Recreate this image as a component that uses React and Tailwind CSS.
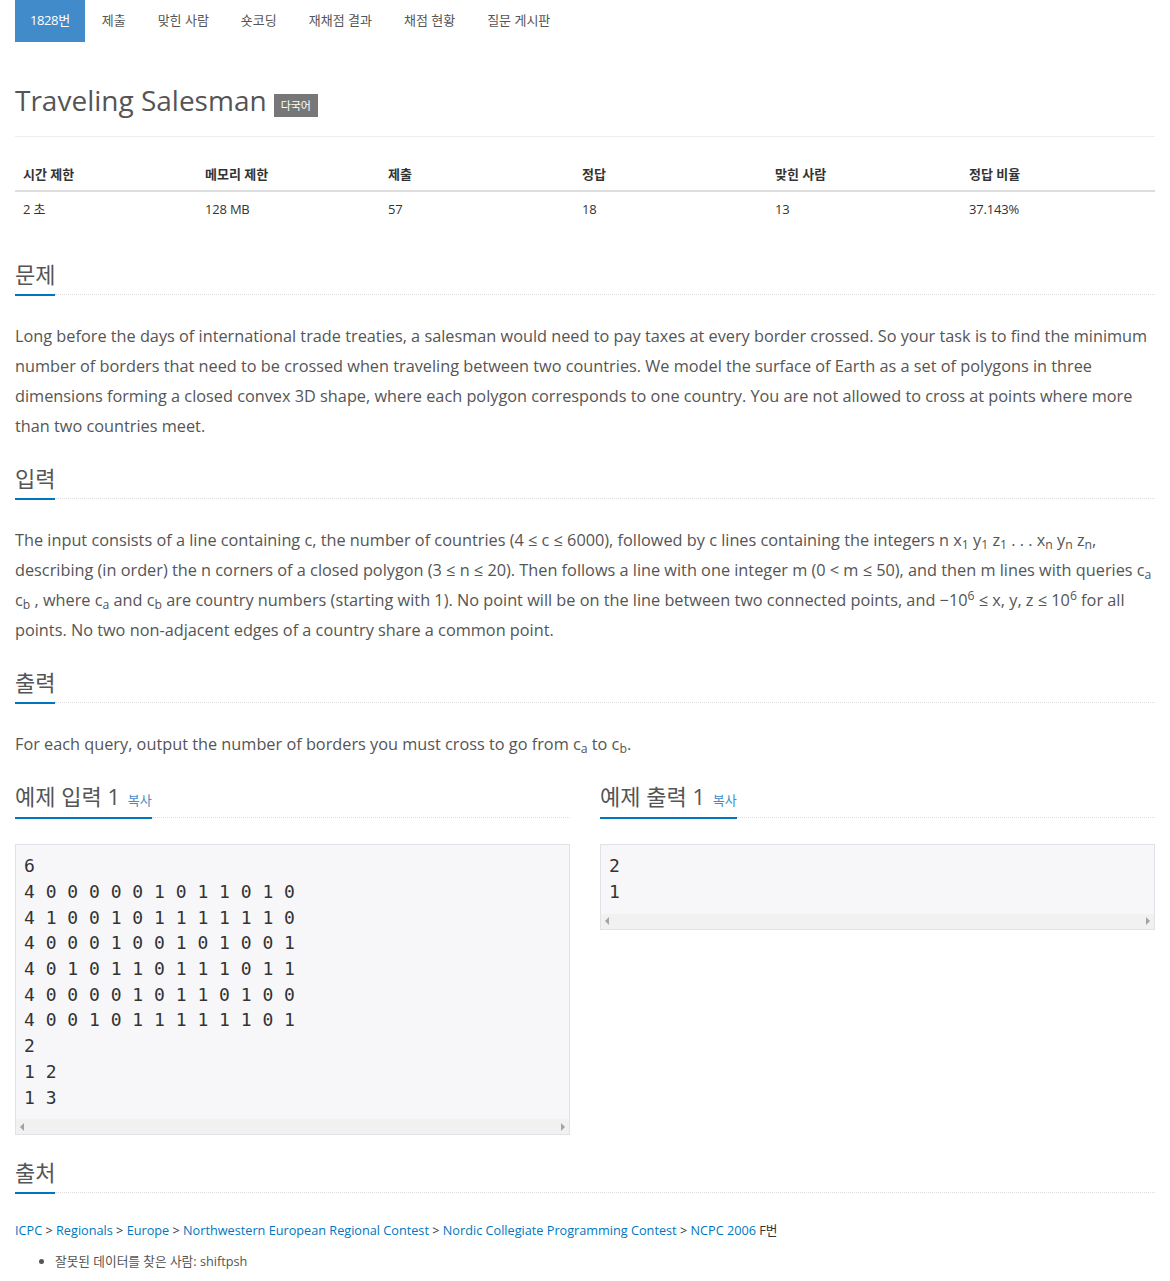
import React from 'react';

const FONT = { fontFamily: '"Open Sans", "Noto Sans CJK KR", sans-serif' };

const TABS = ['1828번', '제출', '맞힌 사람', '숏코딩', '재채점 결과', '채점 현황', '질문 게시판'];

const STATS = [
  ['시간 제한', '2 초'],
  ['메모리 제한', '128 MB'],
  ['제출', '57'],
  ['정답', '18'],
  ['맞힌 사람', '13'],
  ['정답 비율', '37.143%'],
];

const SAMPLE_IN = `6
4 0 0 0 0 0 1 0 1 1 0 1 0
4 1 0 0 1 0 1 1 1 1 1 1 0
4 0 0 0 1 0 0 1 0 1 0 0 1
4 0 1 0 1 1 0 1 1 1 0 1 1
4 0 0 0 0 1 0 1 1 0 1 0 0
4 0 0 1 0 1 1 1 1 1 1 0 1
2
1 2
1 3`;

const SAMPLE_OUT = `2
1`;

function Headline({ children, pb = 'pb-[7px]' }) {
  return (
    <div className="flex items-end">
      <h2 className={`text-[22px] leading-[26px] ${pb} border-b-2 border-[#0076c0] text-[#555] font-normal whitespace-nowrap`}>
        {children}
      </h2>
      <div className="flex-1 border-b border-dotted border-[#ddd] mb-[1px]" />
    </div>
  );
}

function Section({ title, children, pb }) {
  return (
    <section className="mb-[24px]">
      <Headline pb={pb}>{title}</Headline>
      <div className="mt-[25px]">{children}</div>
    </section>
  );
}

function Tri({ dir }) {
  return (
    <svg width="5" height="8" viewBox="0 0 5 8">
      {dir === 'left' ? <path d="M4 0 L0 4 L4 8 Z" fill="#a3a3a3" /> : <path d="M1 0 L5 4 L1 8 Z" fill="#a3a3a3" />}
    </svg>
  );
}

function Pre({ text }) {
  return (
    <div className="border border-[#e1e1e8] bg-[#f7f7f9]">
      <pre
        className="pl-[8px] pr-[9px] pt-[8px] pb-[9px] text-[18px] leading-[25.7px] text-[#333]"
        style={{ fontFamily: '"DejaVu Sans Mono", monospace' }}
      >
        {text}
      </pre>
      <div className="h-[15px] bg-[#f1f1f1] flex items-center justify-between px-[4px]">
        <Tri dir="left" />
        <Tri dir="right" />
      </div>
    </div>
  );
}

function Copy() {
  return <span className="text-[13px] leading-none text-[#428bca] ml-[2px]">복사</span>;
}

export default function App() {
  return (
    <div className="w-[1170px] px-[15px] bg-white text-[#555]" style={FONT}>
      <ul className="flex gap-[2px] h-[42px] text-[13px]">
        {TABS.map((t, i) => (
          <li
            key={t}
            className={`flex items-center px-[15px] ${i === 0 ? 'bg-[#428bca] text-white tracking-[-0.4px]' : 'text-[#555]'}`}
          >
            {t}
          </li>
        ))}
      </ul>

      <div className="pt-[42px] pb-[9px] mb-[20px] border-b border-[#eee]">
        <h1 className="flex items-end text-[28px] leading-[33px] font-normal text-[#555] mb-[10px]">
          <span>Traveling Salesman</span>
          <span className="ml-[7px] h-[23px] px-[7px] bg-[#777] text-white text-[11px] leading-[23px]">다국어</span>
        </h1>
      </div>

      <div className="grid grid-cols-[182px_183px_194px_193px_194px_1fr] text-[13px] leading-[18.6px] text-[#333]">
        {STATS.map(([h]) => (
          <div key={h} className="px-[8px] pt-[8px] pb-[6px] font-bold border-b-2 border-[#ddd]">
            {h}
          </div>
        ))}
        {STATS.map(([h, v]) => (
          <div key={h} className="px-[8px] py-[8px] tracking-[-0.2px]">
            {v}
          </div>
        ))}
      </div>
      <div className="h-[35px]" />

      <Section title="문제">
        <p className="text-[16.3px] leading-[30px]">
          Long before the days of international trade treaties, a salesman would need to pay taxes at every border crossed. So your task is to find the minimum number of borders that need to be crossed when traveling between two countries. We model the surface of Earth as a set of polygons in three dimensions forming a closed convex 3D shape, where each polygon corresponds to one country. You are not allowed to cross at points where more than two countries meet.
        </p>
      </Section>

      <Section title="입력">
        <p className="text-[16.3px] leading-[30px]">
          The input consists of a line containing c, the number of countries (4 ≤ c ≤ 6000), followed by c lines containing the integers n x<sub>1</sub> y<sub>1</sub> z<sub>1</sub> . . . x<sub>n</sub> y<sub>n</sub> z<sub>n</sub>, describing (in order) the n corners of a closed polygon (3 ≤ n ≤ 20). Then follows a line with one integer m (0 &lt; m ≤ 50), and then m lines with queries c<sub>a</sub> c<sub>b</sub> , where c<sub>a</sub> and c<sub>b</sub> are country numbers (starting with 1). No point will be on the line between two connected points, and −10<sup>6</sup> ≤ x, y, z ≤ 10<sup>6</sup> for all points. No two non-adjacent edges of a country share a common point.
        </p>
      </Section>

      <Section title="출력">
        <p className="text-[16.3px] leading-[30px]">
          For each query, output the number of borders you must cross to go from c<sub>a</sub> to c<sub>b</sub>.
        </p>
      </Section>

      <div className="grid grid-cols-2 gap-[30px]">
        <Section
          pb="pb-[8px]"
          title={
            <>
              예제 입력 1 <Copy />
            </>
          }
        >
          <Pre text={SAMPLE_IN} />
        </Section>
        <Section
          pb="pb-[8px]"
          title={
            <>
              예제 출력 1 <Copy />
            </>
          }
        >
          <Pre text={SAMPLE_OUT} />
        </Section>
      </div>

      <Section title="출처">
        <div className="text-[12.7px] leading-[18.6px] pt-[2px]">
          <p className="text-[#333]">
            <a className="text-[#0076c0]">ICPC</a> &gt; <a className="text-[#0076c0]">Regionals</a> &gt;{' '}
            <a className="text-[#0076c0]">Europe</a> &gt; <a className="text-[#0076c0]">Northwestern European Regional Contest</a> &gt;{' '}
            <a className="text-[#0076c0]">Nordic Collegiate Programming Contest</a> &gt; <a className="text-[#0076c0]">NCPC 2006</a> F번
          </p>
          <ul className="list-disc pl-[40px] mt-[12px] text-[#555]">
            <li>잘못된 데이터를 찾은 사람: shiftpsh</li>
          </ul>
        </div>
      </Section>
    </div>
  );
}
